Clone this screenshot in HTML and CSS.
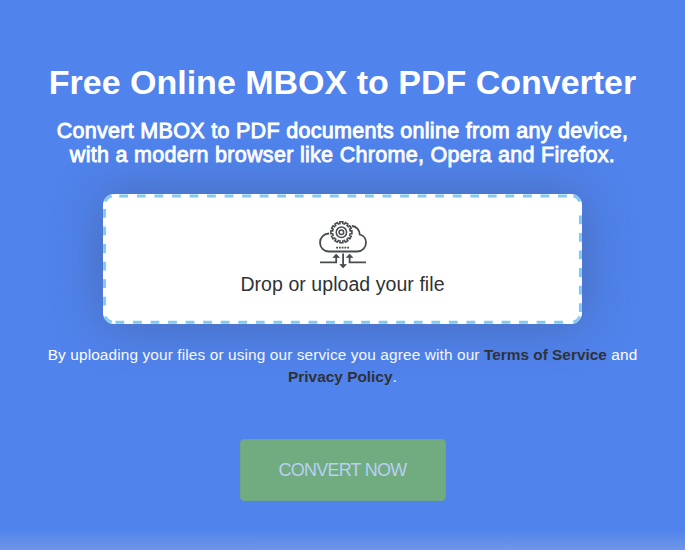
FILE: index.html
```html
<!DOCTYPE html>
<html lang="en">
<head>
<meta charset="utf-8">
<title>Free Online MBOX to PDF Converter</title>
<link rel="stylesheet" href="styles.css">
</head>
<body>
<main class="converter">
  <h1 class="title">Free Online MBOX to PDF Converter</h1>
  <h2 class="subtitle">Convert MBOX to PDF documents online from any device,<br>with a modern browser like Chrome, Opera and Firefox.</h2>
  <div class="dropzone">
    <svg class="dashes" viewBox="0 0 479 130" aria-hidden="true">
      <path d="M16.300 2H468"/>
      <path d="M460 128.300H12"/>
      <path d="M1.600 15V119"/>
      <path d="M477.400 118V15"/>
      <path class="corner" d="M2.200 7.500Q4 3 8.700 2M470.300 2Q475 3 476.800 7.500M2.200 122.500Q4 127 8.700 128M470.300 128Q475 127 476.800 122.500"/>
    </svg>
    <svg class="cloud" viewBox="0 0 48 48" aria-hidden="true">
      <defs><path id="tooth" d="M-2.300 -8.500L-1.450 -8.700V-10.500H1.450V-8.700L2.300 -8.500"/></defs>
      <path d="M10.200 12.500C5 12.500 1 16.500 1 21.500C1 26.500 4.500 30.500 10 30.500H38C43.500 30.500 47 26.500 47 21.500C47 17 44.500 14.500 40.700 13.500C40.500 9 37.500 5.300 32.800 5"/>
      <g class="teeth" transform="translate(22.400 11.300)">
        <use href="#tooth"/><use href="#tooth" transform="rotate(30)"/><use href="#tooth" transform="rotate(60)"/><use href="#tooth" transform="rotate(90)"/><use href="#tooth" transform="rotate(120)"/><use href="#tooth" transform="rotate(150)"/><use href="#tooth" transform="rotate(180)"/><use href="#tooth" transform="rotate(210)"/><use href="#tooth" transform="rotate(240)"/><use href="#tooth" transform="rotate(270)"/><use href="#tooth" transform="rotate(300)"/><use href="#tooth" transform="rotate(330)"/>
      </g>
      <circle class="ring" cx="22.400" cy="11.300" r="5.200"/>
      <circle class="hub" cx="22.400" cy="11.300" r="2.300"/>
      <path class="dots" d="M17.200 26.700H30.200"/>
      <path d="M1 41.300H17.200V36M47 41.300H30.600V36M24.100 32.500V44"/>
      <path class="heads" d="M14 36.500L17.200 33L20.400 36.500ZM27.400 36.500L30.600 33L33.800 36.500ZM20.900 43.500L24.100 47L27.300 43.500Z"/>
    </svg>
    <p class="drop-label">Drop or upload your file</p>
  </div>
  <p class="terms">By uploading your files or using our service you agree with our <a href="#">Terms of Service</a> and<br><a href="#">Privacy Policy</a>.</p>
  <button class="convert" type="button">CONVERT NOW</button>
</main>
</body>
</html>
```
FILE: styles.css
```css
* { box-sizing: border-box; }
body {
  margin: 0;
  background: #5083ec;
  font-family: "Liberation Sans", Arial, sans-serif;
  color: #fff;
}
.converter {
  height: 550px;
  padding-top: 62px;
  display: flex;
  flex-direction: column;
  align-items: center;
  text-align: center;
  white-space: nowrap;
  overflow: hidden;
  background: linear-gradient(to bottom, transparent 529px, #6f96e8 550px);
}
.title { margin: 0; font-size: 34px; line-height: 40px; }
.subtitle {
  margin: 17px 0 0;
  font-size: 21.5px;
  line-height: 24px;
  font-weight: 400;
  letter-spacing: 0.3px;
  -webkit-text-stroke: 0.9px #fff;
}
.dropzone {
  position: relative;
  width: 479px;
  height: 130px;
  margin-top: 27px;
  padding-top: 27px;
  display: flex;
  flex-direction: column;
  align-items: center;
  border-radius: 11px;
  background: #fff;
  box-shadow: 0 0 50px rgba(65, 75, 110, 0.45);
}
.dashes {
  position: absolute;
  inset: 0;
  width: 479px;
  height: 130px;
  fill: none;
  stroke: #82caf4;
  stroke-width: 3px;
  stroke-dasharray: 8.8 8.75;
}
.dashes .corner { stroke-dasharray: none; }
.cloud { width: 48px; height: 48px; fill: none; stroke: #474c4e; stroke-width: 1.8; }
.cloud .teeth { stroke-width: 1.6; }
.cloud .ring { stroke-width: 1.5; }
.cloud .hub { stroke-width: 1.5; }
.cloud .dots { stroke-width: 1.8; stroke-dasharray: 1.8 0.95; }
.cloud .heads { fill: #474c4e; stroke-width: 0.7; }
.drop-label {
  margin: 3px 0 0;
  font-size: 19.5px;
  line-height: 24px;
  letter-spacing: 0.06px;
  color: #303236;
}
.terms { margin: 20px 0 0; font-size: 15.4px; line-height: 21.5px; letter-spacing: 0.12px; }
.terms a { color: #303236; font-weight: 700; letter-spacing: 0; text-decoration: none; }
.convert {
  width: 206px;
  height: 62px;
  margin-top: 52px;
  padding: 0;
  border: 1px solid #6da58d;
  border-radius: 4px;
  background: #70ac80;
  color: #b9cff5;
  font: 18px/24px "Liberation Sans", Arial, sans-serif;
  letter-spacing: -0.75px;
}
```
